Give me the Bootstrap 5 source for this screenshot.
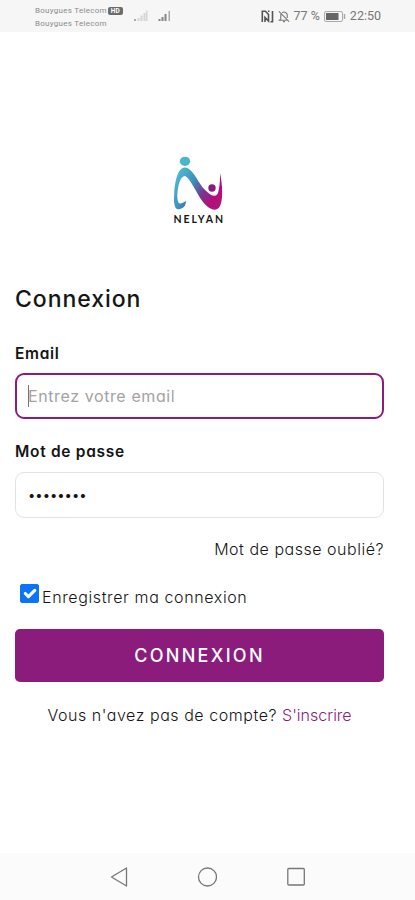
<!DOCTYPE html>
<html lang="fr">
<head>
<meta charset="utf-8">
<meta name="viewport" content="width=device-width, initial-scale=1">
<title>Nelyan – Connexion</title>
<link href="https://cdn.jsdelivr.net/npm/bootstrap@5.3.0/dist/css/bootstrap.min.css" rel="stylesheet">
<style>
:root { --plum: #8b1c7c; }
body { font-family: Inter, "Liberation Sans", sans-serif; font-feature-settings: "cv11"; color: #151515; height: 900px; overflow: hidden; font-size: 16px; line-height: 24px; }
.status-bar { height: 32px; background: #f6f6f6; color: #777; font-family: Roboto, sans-serif; padding-left: 35px; padding-right: 34px; }
.carrier { width: 91px; font-size: 8px; line-height: 13px; padding-top: 4px; letter-spacing: .28px; color: #8c8c8c; }
.hd-tag { font-size: 6.5px; line-height: 8px; padding: 0 3px; background: #6c6c6c; color: #fff; border-radius: 2px; font-weight: 700; letter-spacing: 0; margin-left: 1px; }
.clock { font-size: 12.5px; }
.login { padding: 124px 31px 0 15px; }
.brand { width: 52px; height: 70px; margin-left: 157px; }
.title { font-size: 23px; line-height: 34px; font-weight: 500; margin: 56px 0 26px; letter-spacing: .95px; }
.field-label { font-size: 15.5px; font-weight: 600; line-height: 24px; margin-bottom: 7px; letter-spacing: .7px; }
.form-control.field { height: 46px; border: 1px solid #e3e3e3; border-radius: 9px; padding: 0 13px; font-size: 16px; color: #151515; background: #fff; letter-spacing: .6px; font-feature-settings: "cv11"; }
.form-control.field.active { border: 2px solid var(--plum); padding: 0 11px; }
.form-control.field:focus { border-color: var(--plum); box-shadow: none; }
.form-control.field::placeholder { color: #a3a3a3; opacity: 1; }
.form-control.field.secret { font-size: 13px; letter-spacing: 0; padding: 0 12px; }
.caret { position: absolute; left: 13px; top: 12px; width: 1px; height: 22px; background: #777; }
.group-gap { margin-top: 21px; }
.secret-gap { margin-bottom: 8px; }
.body-text { font-size: 16px; font-weight: 300; }
.forgot { margin-top: 19px; letter-spacing: .52px; }
.remember { margin-top: 23px; padding-left: 5px; letter-spacing: .62px; }
.remember .form-check-input { width: 19px; height: 19px; border-radius: 2px; margin: 0 3px 0 0; }
.remember .form-check-input:checked { background-color: #0b75f5; border-color: #0b75f5; background-size: 21px; }
.remember label { padding-top: 1px; }
.btn.btn-plum { height: 53px; margin-top: 20px; border-radius: 5px; background: var(--plum); color: #fff; font-size: 18px; font-weight: 500; border: 0; letter-spacing: 2.3px; }
.btn.btn-plum:hover { background: #761568; }
.signup { margin-top: 21px; letter-spacing: .55px; }
.plum-link { color: var(--plum); letter-spacing: 0; }
.nav-keys { height: 47px; background: #fbfbfb; padding: 0 109px 0 110px; }
</style>
</head>
<body class="bg-white d-flex flex-column">
<header class="status-bar d-flex align-items-center flex-shrink-0">
  <div class="carrier align-self-start text-nowrap">
    <div class="d-flex align-items-center"><span>Bouygues Telecom</span><span class="hd-tag">HD</span></div>
    <div>Bouygues Telecom</div>
  </div>
  <svg class="ms-2" width="40" height="14" viewBox="0 0 40 14">
    <path fill="#d5d5d5" d="M3.500 9h2v3h-2zM6.500 6.500h2v5.500h-2zM9.500 4h2v8h-2zM12 1.500h1.500v10.500h-1.500z"/>
    <path d="M0 10h2v2H0z" fill="#aaa"/>
    <path fill="#858585" d="M24.500 10h2v2h-2zM27.500 8h2v4h-2zM30.500 5h2v7h-2z"/>
    <path d="M34.500 2H36v10h-1.500z" fill="#aaa"/>
  </svg>
  <div class="ms-auto d-flex align-items-center clock">
    <svg width="13" height="13" viewBox="0 0 13 13" fill="none" stroke="#555" stroke-width="1.600"><path d="M1.300 12V1.300H4.500L7.500 4.500V11L4 7.500V12M7 1.300h1.500M11.500 1v10.700H9.500"/></svg>
    <svg class="ms-1 me-1" width="12" height="13" viewBox="0 0 13 13" fill="none" stroke="#777" stroke-width="1.200"><path d="M1 1l11 11M3 4v5L1.500 10.500h8M4.500 2.500C7 .5 10 2.500 10 5v3M5.500 12h2"/></svg>
    <span>77 %</span>
    <svg class="ms-1" width="22" height="11" viewBox="0 0 22 11"><rect x=".5" y=".5" width="18" height="10" rx="1.500" fill="none" stroke="#aaa"/><rect x="2" y="2" width="12.500" height="7" fill="#666"/><path d="M20.500 3v5" stroke="#aaa" stroke-width="1.500"/></svg>
    <span class="ms-1">22:50</span>
  </div>
</header>

<main class="login flex-grow-1">
  <svg class="brand d-block" viewBox="0 0 52 70" role="img" aria-label="Nelyan">
    <defs><linearGradient id="ribbon" gradientUnits="userSpaceOnUse" x1="3" y1="20" x2="49" y2="46">
      <stop offset="0" stop-color="#53b9d6"/><stop offset=".35" stop-color="#3b91bd"/><stop offset=".62" stop-color="#78358f"/><stop offset=".85" stop-color="#b90c78"/><stop offset="1" stop-color="#a71979"/></linearGradient></defs>
    <ellipse cx="13" cy="5.300" rx="5.200" ry="4.600" fill="#4bb4d1"/>
    <path fill="url(#ribbon)" d="M8 53C2 55 1.500 46 2.200 38C3 24 6 11.500 13 11.500C21 12 26 27 33 34C39 40 45 43 46.500 35C48 29 48 23 48 17C50.500 28 51.500 45 47.500 51C43 57 36 52 31 46C24 37 19 23 13 20C8 20 5 32 5.500 43C6 49 9 48 14 45C14 49 12 52 8 53Z"/>
    <circle cx="40" cy="32" r="3.700" fill="#8c1a83"/>
    <text x="1.500" y="67.200" textLength="49.500" font-family="Lato, sans-serif" font-size="10.500" font-weight="700" fill="#171717">NELYAN</text>
  </svg>

  <form>
    <h1 class="title">Connexion</h1>

    <label class="field-label d-block" for="email">Email</label>
    <div class="position-relative">
      <input class="form-control field active" id="email" type="email" placeholder="Entrez votre email">
      <span class="caret"></span>
    </div>

    <label class="field-label group-gap secret-gap d-block" for="password">Mot de passe</label>
    <input class="form-control field secret" id="password" type="password" value="12345678">

    <div class="forgot body-text text-end"><a class="text-reset text-decoration-none" href="#">Mot de passe oublié?</a></div>

    <div class="remember body-text d-flex align-items-start">
      <input class="form-check-input flex-shrink-0" id="remember" type="checkbox" checked>
      <label for="remember">Enregistrer ma connexion</label>
    </div>

    <button class="btn btn-plum w-100" type="button">CONNEXION</button>

    <p class="signup body-text text-center mb-0">Vous n'avez pas de compte? <a class="plum-link text-decoration-none" href="#">S'inscrire</a></p>
  </form>
</main>

<footer class="nav-keys d-flex align-items-center justify-content-between flex-shrink-0">
  <svg width="18" height="20" viewBox="0 0 18 20" fill="none" stroke="#777" stroke-width="1.300" stroke-linejoin="round"><path d="M16.500 1v18L1.500 10Z"/></svg>
  <svg width="20" height="20" viewBox="0 0 20 20" fill="none" stroke="#777" stroke-width="1.300"><circle cx="10.500" cy="10" r="9"/></svg>
  <svg width="20" height="20" viewBox="0 0 20 20" fill="none" stroke="#777" stroke-width="1.300"><rect x="1.800" y="1.500" width="16.500" height="16.500" rx="1"/></svg>
</footer>
<script src="https://cdn.jsdelivr.net/npm/bootstrap@5.3.0/dist/js/bootstrap.bundle.min.js"></script>
</body>
</html>
